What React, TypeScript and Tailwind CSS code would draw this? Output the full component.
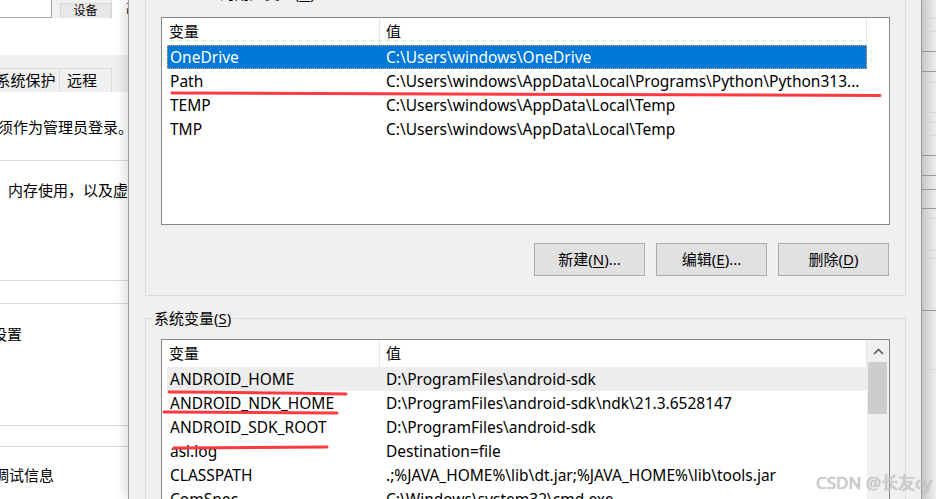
import React from "react";

type EnvVar = { name: string; value: string };

const userVars: EnvVar[] = [
  { name: "OneDrive", value: "C:\\Users\\windows\\OneDrive" },
  { name: "Path", value: "C:\\Users\\windows\\AppData\\Local\\Programs\\Python\\Python313..." },
  { name: "TEMP", value: "C:\\Users\\windows\\AppData\\Local\\Temp" },
  { name: "TMP", value: "C:\\Users\\windows\\AppData\\Local\\Temp" },
];

const systemVars: EnvVar[] = [
  { name: "ANDROID_HOME", value: "D:\\ProgramFiles\\android-sdk" },
  { name: "ANDROID_NDK_HOME", value: "D:\\ProgramFiles\\android-sdk\\ndk\\21.3.6528147" },
  { name: "ANDROID_SDK_ROOT", value: "D:\\ProgramFiles\\android-sdk" },
  { name: "asl.log", value: "Destination=file" },
  { name: "CLASSPATH", value: ".;%JAVA_HOME%\\lib\\dt.jar;%JAVA_HOME%\\lib\\tools.jar" },
  { name: "ComSpec", value: "C:\\Windows\\system32\\cmd.exe" },
  { name: "DriverData", value: "C:\\Windows\\System32\\Drivers\\DriverData" },
];

function Scrollbar() {
  return (
    <div className="flex w-[22px] flex-col bg-[#f0f0f0]">
      <div className="flex h-[22px] items-center justify-center">
        <svg width="11" height="7" viewBox="0 0 11 7">
          <polyline points="1,6 5.5,1.5 10,6" fill="none" stroke="#606060" strokeWidth="1.6" />
        </svg>
      </div>
      <div className="ml-[1px] h-[52px] w-[19px] bg-[#cdcdcd]" />
    </div>
  );
}

function VarList({
  rows,
  selected,
  hot,
  scroll,
  boxClass,
}: {
  rows: EnvVar[];
  selected?: number;
  hot?: number;
  scroll?: boolean;
  boxClass: string;
}) {
  return (
    <div className={`flex overflow-hidden border border-[#828790] bg-white ${boxClass}`}>
      <div className="flex-1 pl-[5px]">
        {/* column headers */}
        <div className="flex h-[27px] w-[700px]">
          <div className="flex w-[213px] items-center border-r border-[#e5e5e5] pl-[2px] text-[15px]">变量</div>
          <div className="flex flex-1 items-center border-r border-[#e5e5e5] pl-[6px] text-[15px]">值</div>
        </div>
        {rows.map((r, i) => (
          <div
            key={r.name}
            className={`flex h-[24px] w-[700px] items-center whitespace-nowrap pt-[2px] ${
              i === selected
                ? "bg-[#0078d7] text-white outline-1 -outline-offset-1 outline-dotted outline-[#e9a46a]"
                : i === hot
                ? "bg-[#ededed]"
                : ""
            }`}
          >
            <div className="w-[213px] overflow-hidden pl-[3px]">{r.name}</div>
            <div className="flex-1 overflow-hidden pl-[6px]">{r.value}</div>
          </div>
        ))}
      </div>
      {scroll && <Scrollbar />}
    </div>
  );
}

function WinButton({ label, keyChar, dots }: { label: string; keyChar: string; dots?: boolean }) {
  return (
    <button className="flex h-[33px] w-[111px] items-center justify-center border border-[#adadad] bg-[#e1e1e1] text-[15px] text-black">
      {label}(<span className="underline underline-offset-2">{keyChar}</span>){dots ? "..." : ""}
    </button>
  );
}

// Settings window peeking out from behind the dialog
function BackWindow() {
  return (
    <div className="flex w-[128px] shrink-0 flex-col overflow-hidden bg-white text-[15px]">
      <div className="flex h-[18px] bg-[#f0f0f0]">
        <div className="w-[52px] border-r border-b border-[#a5a5a5] bg-white" />
        <div className="w-[8px]" />
        <div className="mt-[3px] flex w-[51px] items-center justify-center border-x border-t border-[#d9d9d9] bg-[#e8e8e8] text-[12px] leading-none">
          设备
        </div>
        <div className="flex-1 overflow-hidden whitespace-nowrap border-l border-[#d9d9d9] bg-white pl-[14px] text-[12px] leading-[18px]">
          高级
        </div>
      </div>
      <div className="h-[37px]" />
      <div className="h-[13px] bg-[#f0f0f0]" />
      <div className="flex h-[24px] bg-[#f0f0f0]">
        <div className="-ml-[8px] flex w-[68px] items-center justify-center border-r border-t border-[#dadada] whitespace-nowrap">
          系统保护
        </div>
        <div className="flex w-[52px] items-center border-r border-t border-[#dadada] pl-[7px]">远程</div>
      </div>
      <div className="h-[69px] border-b border-[#dadada] pt-[25px] whitespace-nowrap">
        <div className="-ml-[17px] leading-[20px]">必须作为管理员登录。</div>
      </div>
      <div className="h-[120px] border-b border-[#dadada] pt-[19px] pl-[8px] whitespace-nowrap">
        <div className="leading-[20px]">内存使用，以及虚拟内存</div>
      </div>
      <div className="h-[23px] border-b border-[#dadada]" />
      <div className="h-[122px] border-b border-[#dadada] pt-[20px] whitespace-nowrap">
        <div className="-ml-[8px] leading-[20px]">设置</div>
      </div>
      <div className="h-[21px] border-b border-[#dadada]" />
      <div className="pt-[18px] whitespace-nowrap">
        <div className="-ml-[6px] leading-[20px]">调试信息</div>
      </div>
    </div>
  );
}

// Edge of another window behind the dialog's right side
function RightEdge() {
  const lines = [18, 31, 51, 71, 82, 112, 122, 135, 155, 175, 189, 208, 218, 250, 258, 310, 369];
  const dark = new Set([51, 71, 155, 175, 189, 208, 310]);
  return (
    <div className="flex flex-1 flex-col bg-gradient-to-r from-[#cacaca] to-[#eeeeee]">
      {lines.map((y, i) => (
        <div
          key={y}
          className={`h-px shrink-0 ${dark.has(y) ? "bg-[#9a9a9a]" : "bg-[#d8d8d8]"}`}
          style={{ marginTop: y - (i === 0 ? 0 : lines[i - 1] + 1) }}
        />
      ))}
    </div>
  );
}

export default function App() {
  return (
    <div className="relative flex h-[499px] w-[936px] overflow-hidden bg-[#f0f0f0] font-['Noto_Sans','Noto_Sans_CJK_SC',sans-serif] text-[15.5px] text-black">
      <BackWindow />

      <div className="relative z-10 w-[794px] shrink-0 border-x border-[#9a9a9a] bg-[#f0f0f0] shadow-[-4px_0_10px_rgba(0,0,0,0.12)]">
        <fieldset className="-mt-[17px] ml-[16px] w-[761px] border border-[#dcdcdc] px-[15px] pt-[14px] pb-[19px]">
          <legend className="-ml-[9px] px-[2px] text-[15px] leading-[20px]">
            windows 的用户变量(<span className="underline underline-offset-2">U</span>)
          </legend>
          <VarList rows={userVars} selected={0} boxClass="h-[208px]" />
          <div className="mt-[18px] flex justify-end gap-[11px] pr-[1px]">
            <WinButton label="新建" keyChar="N" dots />
            <WinButton label="编辑" keyChar="E" dots />
            <WinButton label="删除" keyChar="D" />
          </div>
        </fieldset>

        <fieldset className="mt-[12px] ml-[16px] w-[761px] border border-[#dcdcdc] px-[15px] pt-[11px]">
          <legend className="-ml-[9px] px-[2px] text-[15px] leading-[20px]">
            系统变量(<span className="underline underline-offset-2">S</span>)
          </legend>
          <VarList rows={systemVars} hot={0} scroll boxClass="h-[200px]" />
        </fieldset>
      </div>

      <RightEdge />

      {/* red marker strokes */}
      <svg className="pointer-events-none absolute inset-0 z-20" width="936" height="499" viewBox="0 0 936 499">
        <g fill="none" stroke="#ff3a40" strokeWidth="3" strokeLinecap="round">
          <path d="M172 93 Q520 94.5 880 95.5" />
          <path d="M169 392 Q260 392.5 346 394" />
          <path d="M164 412 Q250 412.5 337 413" />
          <path d="M174 448 Q250 447.5 327 447" />
        </g>
      </svg>

      <div className="pointer-events-none absolute right-[4px] bottom-[6px] z-30 text-[17px] leading-[20px] text-[#cfcfcf] [text-shadow:0_0_1px_#9a9a9a]">
        CSDN @长友cy
      </div>
    </div>
  );
}
